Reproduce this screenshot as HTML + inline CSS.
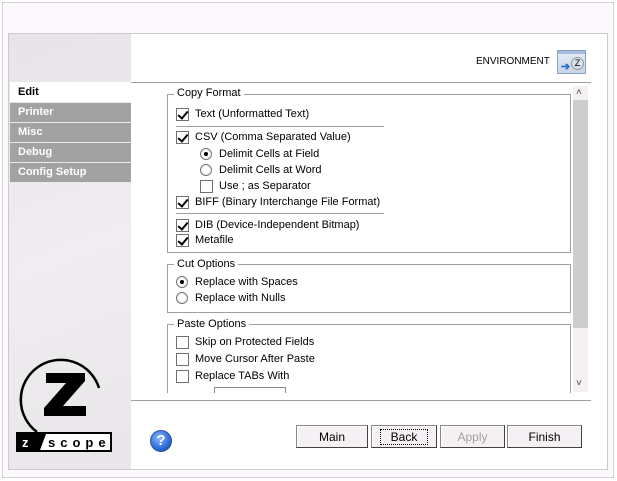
<!DOCTYPE html>
<html><head><style>
*{margin:0;padding:0;box-sizing:border-box}
body{width:617px;height:481px;background:#fff;font-family:"Liberation Sans",sans-serif;font-size:11px;color:#000;position:relative;overflow:hidden}
.a{position:absolute}
.outer{left:2px;top:2px;width:612px;height:476px;border:1px solid #d8d0d8;background:#fbf9fb}
.panel{left:8px;top:33px;width:600px;height:437px;border:1px solid #d0c8d0;background:#fff}
.side{left:9px;top:34px;width:122px;height:435px;background:linear-gradient(160deg,#e6e4e6,#efedef 50%,#e8e6e8)}
.tab{left:10px;width:121px;height:19px;background:#a2a2a2;color:#fff;font-weight:bold;font-size:11px;padding:3px 0 0 8px}
.gb{border:1px solid #a0a0a0}
.lg{background:#fff;padding:0 3px;font-size:11px}
.cb{width:13px;height:13px;border:1px solid #707070;background:#fff}
.cb.c::after{content:"";position:absolute;left:3px;top:0px;width:4px;height:8px;border:solid #000;border-width:0 2px 2px 0;transform:rotate(40deg)}
.rb{width:12px;height:12px;border:1px solid #707070;border-radius:50%;background:#fff}
.rb.c::after{content:"";position:absolute;left:3px;top:3px;width:4px;height:4px;border-radius:50%;background:#000}
.t{font-size:11px;white-space:nowrap}
.hl{height:1px;background:#a0a0a0}
.btn{top:425px;height:23px;border:1px solid #888;border-right-color:#404040;border-bottom-color:#404040;background:#f4f0f4;text-align:center;font-size:12px;padding-top:4px;box-shadow:inset 1px 1px 0 #fff}
</style></head><body>
<div class="a outer"></div>
<div class="a panel"></div>
<div class="a side"></div>
<div class="a" style="left:10px;top:82px;width:121px;height:20px;background:#fff;font-weight:bold;padding:4px 0 0 8px">Edit</div>
<div class="a tab" style="top:103px">Printer</div>
<div class="a tab" style="top:123px">Misc</div>
<div class="a tab" style="top:143px">Debug</div>
<div class="a tab" style="top:163px">Config Setup</div>

<!-- logo -->
<svg class="a" style="left:15px;top:350px" width="100" height="110" viewBox="0 0 100 110">
<path d="M84 38 A40 40 0 1 0 22 82" fill="none" stroke="#000" stroke-width="2.5"/>
<polygon points="31,23 70,23 70,31 48,56 71,56 71,66 29,66 29,58 51,33 31,33" fill="#000"/>
<rect x="1" y="82" width="96" height="20" fill="#000"/>
<rect x="25" y="84" width="70" height="16" fill="#fff"/>
<polygon points="25,84 31,84 25,100" fill="#000"/>
<text x="7" y="97" fill="#fff" font-family="Liberation Sans" font-weight="bold" font-size="13">z</text>
<text x="33" y="97" fill="#000" font-family="Liberation Sans" font-weight="bold" font-size="13" letter-spacing="5">scope</text>
</svg>

<div class="a t" style="left:476px;top:56px;font-size:10px">ENVIRONMENT</div>
<div class="a" style="left:557px;top:50px;width:29px;height:24px;border:1px solid #8aa0c0;background:linear-gradient(#e8eef8,#c8d4e8)">
<div class="a" style="left:0;top:0;width:27px;height:3px;background:#a8bcdc"></div>
<div class="a" style="left:3px;top:9px;font-size:11px;color:#2a6ad0;font-weight:bold">➔</div>
<div class="a" style="left:13px;top:6px;width:13px;height:13px;border:1px solid #998;border-radius:50%;font-size:9px;text-align:center;line-height:11px">Z</div>
</div>
<div class="a hl" style="left:131px;top:82px;width:460px"></div>

<!-- scrollbar -->
<div class="a" style="left:573px;top:86px;width:15px;height:306px;background:#f4f0f4"></div>
<div class="a" style="left:573px;top:100px;width:15px;height:228px;background:#cdcdcd"></div>
<div class="a" style="left:576px;top:87px;font-size:10px;color:#444">˄</div>
<div class="a" style="left:576px;top:378px;font-size:10px;color:#444">˅</div>

<!-- Copy Format -->
<div class="a gb" style="left:167px;top:94px;width:404px;height:159px"></div>
<div class="a lg" style="left:174px;top:87px">Copy Format</div>
<div class="a cb c" style="left:176px;top:108px"></div><div class="a t" style="left:195px;top:108px">Text (Unformatted Text)</div>
<div class="a hl" style="left:176px;top:126px;width:208px"></div>
<div class="a cb c" style="left:176px;top:131px"></div><div class="a t" style="left:195px;top:131px">CSV (Comma Separated Value)</div>
<div class="a rb c" style="left:200px;top:148px"></div><div class="a t" style="left:219px;top:148px">Delimit Cells at Field</div>
<div class="a rb" style="left:200px;top:164px"></div><div class="a t" style="left:219px;top:164px">Delimit Cells at Word</div>
<div class="a cb" style="left:200px;top:180px"></div><div class="a t" style="left:219px;top:180px">Use ; as Separator</div>
<div class="a cb c" style="left:176px;top:196px"></div><div class="a t" style="left:195px;top:196px">BIFF (Binary Interchange File Format)</div>
<div class="a hl" style="left:176px;top:213px;width:208px"></div>
<div class="a cb c" style="left:176px;top:219px"></div><div class="a t" style="left:195px;top:219px">DIB (Device-Independent Bitmap)</div>
<div class="a cb c" style="left:176px;top:234px"></div><div class="a t" style="left:195px;top:234px">Metafile</div>

<!-- Cut -->
<div class="a gb" style="left:167px;top:264px;width:404px;height:49px"></div>
<div class="a lg" style="left:174px;top:258px">Cut Options</div>
<div class="a rb c" style="left:176px;top:276px"></div><div class="a t" style="left:195px;top:276px">Replace with Spaces</div>
<div class="a rb" style="left:176px;top:292px"></div><div class="a t" style="left:195px;top:292px">Replace with Nulls</div>

<!-- Paste -->
<div class="a" style="left:167px;top:324px;width:404px;height:69px;border:1px solid #a0a0a0;border-bottom:none"></div>
<div class="a lg" style="left:174px;top:318px">Paste Options</div>
<div class="a cb" style="left:176px;top:336px"></div><div class="a t" style="left:195px;top:336px">Skip on Protected Fields</div>
<div class="a cb" style="left:176px;top:353px"></div><div class="a t" style="left:195px;top:353px">Move Cursor After Paste</div>
<div class="a cb" style="left:176px;top:370px"></div><div class="a t" style="left:195px;top:370px">Replace TABs With</div>
<div class="a" style="left:214px;top:387px;width:72px;height:6px;border:1px solid #888;border-bottom:none"></div>

<div class="a hl" style="left:131px;top:400px;width:460px"></div>

<!-- help -->
<div class="a" style="left:150px;top:430px;width:22px;height:22px;border-radius:50%;background:radial-gradient(circle at 40% 35%,#8ab8ff,#1f5fd0 70%,#1a3f90);border:1px solid #3050a0;color:#fff;font-weight:bold;font-size:15px;text-align:center;line-height:20px">?</div>

<div class="a btn" style="left:296px;width:72px">Main</div>
<div class="a btn" style="left:371px;width:66px"><span style="border:1px dotted #000;padding:0 10px">Back</span></div>
<div class="a btn" style="left:440px;width:65px;color:#a0a0a0">Apply</div>
<div class="a btn" style="left:507px;width:75px">Finish</div>
</body></html>
